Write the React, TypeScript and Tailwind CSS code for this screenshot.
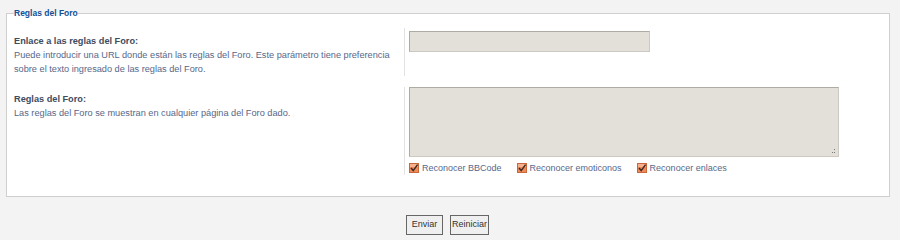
import { useState } from "react";

function CheckMark() {
  return (
    <svg width="10" height="10" viewBox="0 0 10 10" className="shrink-0">
      <rect x="0.5" y="0.5" width="9" height="9" fill="#ef8a5a" stroke="#c9673a" />
      <rect x="1" y="1" width="8" height="3" fill="#f6b08e" />
      <path d="M2 5 L4.2 7.6 L8.6 1.6" fill="none" stroke="#3b2a22" strokeWidth="1.5" />
    </svg>
  );
}

const OPTIONS = [
  { id: "bbcode", label: "Reconocer BBCode" },
  { id: "smilies", label: "Reconocer emoticonos" },
  { id: "urls", label: "Reconocer enlaces" },
];

export default function App() {
  const [link, setLink] = useState("");
  const [rules, setRules] = useState("");

  return (
    <div className="min-h-screen bg-[#f3f3f3] pt-[7px] font-['Liberation_Sans',Arial,sans-serif] text-[9.2px]">
      <fieldset className="ml-[6px] mr-[10px] border border-[#cfcfcf] bg-white pb-[21px] pt-[9px]">
        <legend className="ml-[7px] text-[8.5px] font-bold leading-[12px] text-[#115098]">Reglas del Foro</legend>

        {/* Enlace */}
        <div className="flex">
          <div className="w-[398px] shrink-0 border-r border-[#e3e3e3] pl-[7px] pt-[7px]">
            <label className="block font-bold leading-[13px] text-[#3e4b5e]">Enlace a las reglas del Foro:</label>
            <p className="leading-[14px] text-[#56688a]">
              Puede introducir una URL donde están las reglas del Foro. Este parámetro tiene preferencia sobre el texto ingresado de las reglas del Foro.
            </p>
          </div>
          <div className="ml-[4px] pt-[3px]">
            <input
              value={link}
              onChange={(e) => setLink(e.target.value)}
              className="block h-[21px] w-[241px] border border-[#cdc8c1] border-l-[#aeaaa4] border-t-[#aeaaa4] bg-[#e3dfd9] px-1 text-[#333] outline-none"
            />
          </div>
        </div>

        {/* Reglas */}
        <div className="mt-[11px] flex">
          <div className="w-[398px] shrink-0 border-r border-[#e3e3e3] pl-[7px] pt-[6px]">
            <label className="block font-bold leading-[13px] text-[#3e4b5e]">Reglas del Foro:</label>
            <p className="leading-[14px] text-[#56688a]">Las reglas del Foro se muestran en cualquier página del Foro dado.</p>
          </div>
          <div className="ml-[4px]">
            <div className="relative">
              <textarea
                value={rules}
                onChange={(e) => setRules(e.target.value)}
                className="block h-[70px] w-[430px] resize-none border border-[#cdc8c1] border-l-[#aeaaa4] border-t-[#aeaaa4] bg-[#e3dfd9] p-1 text-[#333] outline-none"
              />
              {/* grip dots */}
              <svg width="5" height="5" viewBox="0 0 5 5" className="absolute bottom-[3px] right-[3px]">
                <rect x="3" y="0" width="1" height="1" fill="#777" />
                <rect x="1" y="3" width="1" height="1" fill="#777" />
                <rect x="3" y="3" width="1" height="1" fill="#777" />
              </svg>
            </div>
            <div className="flex pb-[1px] pt-[5px] text-[9px] leading-[12px] text-[#56688a]">
              {OPTIONS.map((o, i) => (
                <label key={o.id} className={`flex items-center gap-[3px] ${i > 0 ? "ml-[15px]" : ""}`}>
                  <CheckMark />
                  <span>{o.label}</span>
                </label>
              ))}
            </div>
          </div>
        </div>
      </fieldset>

      <div className="mt-[18px] flex justify-center gap-[7px] pr-[5px]">
        <button className="h-[20px] w-[37px] border border-[#666] bg-[#efefef] text-[9px] text-[#333]">Enviar</button>
        <button className="h-[20px] w-[39px] border border-[#666] bg-[#efefef] text-[9px] text-[#333]">Reiniciar</button>
      </div>
    </div>
  );
}
